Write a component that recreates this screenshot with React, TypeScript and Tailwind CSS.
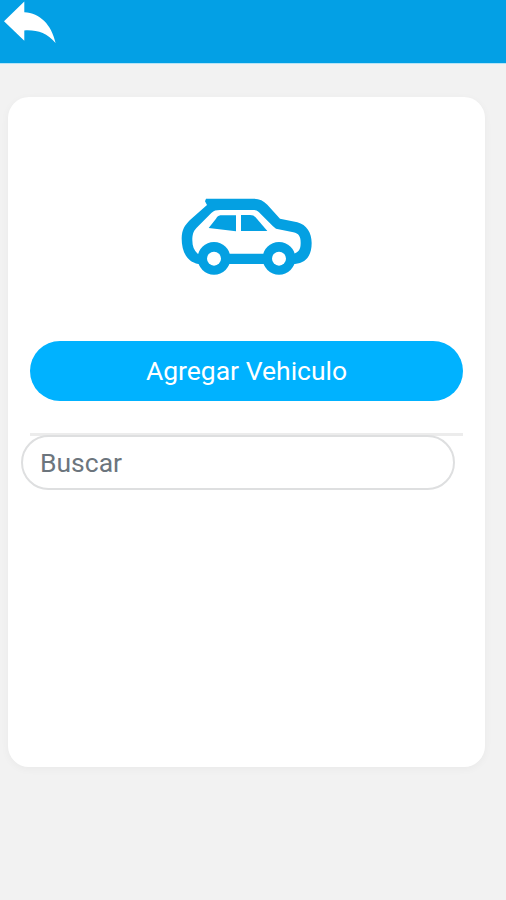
import { useState } from 'react';

function BackArrow() {
  return (
    <svg viewBox="0 0 56 44" className="w-14 h-11" fill="white" aria-hidden="true">
      <path d="M4 21.3 L24.3 1.5 V12.2 C40 13 51.5 24.5 55.6 43 C46.500 32.500 37 29.700 24.300 30.400 V40.800 Z" />
    </svg>
  );
}

function CarIcon() {
  return (
    <svg viewBox="0 0 465 300" className="w-[155px] h-[100px]" fill="#04a0e2" aria-hidden="true">
      {/* body */}
      <path
        fillRule="evenodd"
        d="M108 41 H250 C268 41 280 47 292 59 L330 101 L382 112 C410 119 425 144 425 174 C425 212 408 234 375 237 H85 C50 230 35 200 35 160 C36 132 44 122 60 105 L111 60 L105 49 Z
           M150 75 C138 75 132 77 124 84 L80 128 C69 139 67 151 67 166 C67 184 72 197 83 206 H372 C386 202 392 193 392 174 C392 154 386 145 370 142 L318 131 L309 124 L267 82 C261 76 255 75 248 75 Z"
      />
      {/* windows */}
      <path d="M151 91 H198 V139 L116 129 L138 101 C142 95 145 92 151 91 Z" />
      <path d="M213 90 H240 C248 90 252 92 258 98 L292 138 H213 Z" />
      {/* wheels */}
      <circle cx="132" cy="220" r="49" />
      <circle cx="327" cy="220" r="49" />
      <circle cx="132" cy="221" r="21" fill="white" />
      <circle cx="327" cy="221" r="21" fill="white" />
    </svg>
  );
}

export default function App() {
  const [search, setSearch] = useState('');

  return (
    <div className="min-h-screen bg-[#f2f2f2] font-[Roboto,sans-serif]">
      <header className="h-16 bg-[#03a0e5] border-b border-[#b5e4f7]">
        <button type="button" aria-label="Volver" className="block">
          <BackArrow />
        </button>
      </header>

      <main className="pt-[33px] pl-2 pr-[21px]">
        <section className="h-[670px] rounded-[21px] bg-white px-[22px] pt-[88px] shadow-[0_2px_8px_rgba(0,0,0,0.04)]">
          <div className="flex justify-center pl-0.5">
            <CarIcon />
          </div>

          <button
            type="button"
            className="mt-14 block h-[60px] w-full rounded-full bg-[#00b2ff] text-[26.5px] text-white"
          >
            Agregar Vehiculo
          </button>

          <hr className="mt-8 border-t-[3px] border-[#ececec]" />

          <input
            type="text"
            placeholder="Buscar"
            value={search}
            onChange={e => setSearch(e.target.value)}
            className="-ml-[9px] -mt-px block h-[55px] w-[434px] rounded-full border-2 border-[#dedfe0] bg-white px-[17px] text-[26.5px] text-[#6c757d] placeholder:text-[#6c757d] outline-none"
          />
        </section>
      </main>
    </div>
  );
}
